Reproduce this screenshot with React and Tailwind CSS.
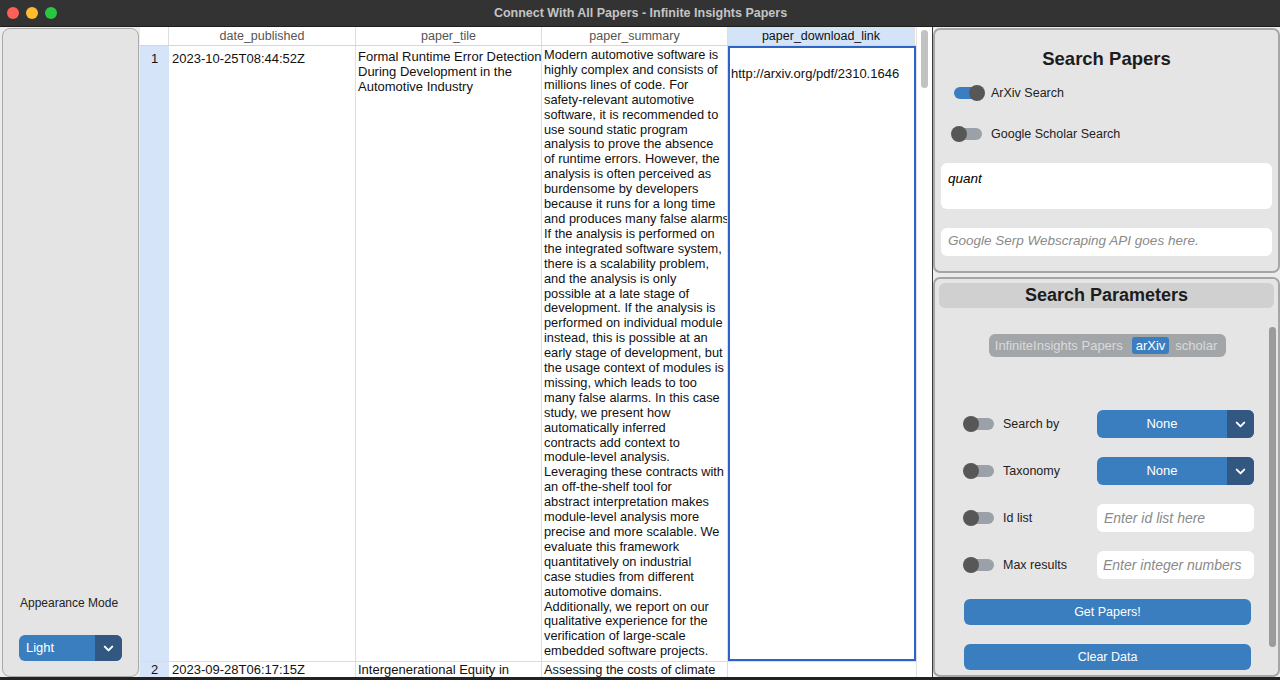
import React from "react";
import { ChevronDown } from "lucide-react";

const summaryLines = [
  "Modern automotive software is",
  "highly complex and consists of",
  "millions lines of code. For",
  "safety-relevant automotive",
  "software, it is recommended to",
  "use sound static program",
  "analysis to prove the absence",
  "of runtime errors. However, the",
  "analysis is often perceived as",
  "burdensome by developers",
  "because it runs for a long time",
  "and produces many false alarms",
  "If the analysis is performed on",
  "the integrated software system,",
  "there is a scalability problem,",
  "and the analysis is only",
  "possible at a late stage of",
  "development. If the analysis is",
  "performed on individual module",
  "instead, this is possible at an",
  "early stage of development, but",
  "the usage context of modules is",
  "missing, which leads to too",
  "many false alarms. In this case",
  "study, we present how",
  "automatically inferred",
  "contracts add context to",
  "module-level analysis.",
  "Leveraging these contracts with",
  "an off-the-shelf tool for",
  "abstract interpretation makes",
  "module-level analysis more",
  "precise and more scalable. We",
  "evaluate this framework",
  "quantitatively on industrial",
  "case studies from different",
  "automotive domains.",
  "Additionally, we report on our",
  "qualitative experience for the",
  "verification of large-scale",
  "embedded software projects.",
];

// switch like the customtkinter one
const Switch = ({ on }) => (
  <div className="relative w-[32px] h-[16px] shrink-0">
    <div
      className={
        on
          ? "absolute left-[1px] right-[1px] top-[2px] bottom-[2px] rounded-full bg-[#3a7ebf]"
          : "absolute left-[1px] right-[1px] top-[2px] bottom-[2px] rounded-full bg-[#9aa1a8]"
      }
    />
    <div
      className={
        on
          ? "absolute right-0 top-0 w-[16px] h-[16px] rounded-full bg-[#575757]"
          : "absolute left-0 top-0 w-[16px] h-[16px] rounded-full bg-[#575757]"
      }
    />
  </div>
);

const Dropdown = ({ value, className, center }) => (
  <div className={"flex rounded-[6px] overflow-hidden bg-[#3a7ebf] text-white text-[13px] " + className}>
    <div className={center ? "flex-1 flex items-center justify-center" : "flex-1 flex items-center pl-[7px]"}>
      {value}
    </div>
    <div className="w-[27px] bg-[#325882] flex items-center justify-center">
      <ChevronDown size={15} strokeWidth={3.2} />
    </div>
  </div>
);

const ParamRow = ({ label, children }) => (
  <div className="flex items-center h-[28px]">
    <div className="flex items-center w-[162px] pl-[28px] whitespace-nowrap">
      <Switch />
      <span className="ml-[8px] text-[12.5px] text-[#222]">{label}</span>
    </div>
    {children}
  </div>
);

export default function App() {
  return (
    <div className="w-[1280px] h-[680px] flex flex-col bg-[#ececec] overflow-hidden font-['Liberation_Sans',Arial,sans-serif]">
      {/* title bar */}
      <div className="h-[27px] shrink-0 bg-[#333333] flex items-center relative border-b border-[#1e1e1e]">
        <div className="flex gap-[7px] pl-[7px]">
          <div className="w-[12px] h-[12px] rounded-full bg-[#ff5f57]" />
          <div className="w-[12px] h-[12px] rounded-full bg-[#febc2e]" />
          <div className="w-[12px] h-[12px] rounded-full bg-[#28c840]" />
        </div>
        <div className="flex-1 text-center text-[12.5px] font-bold text-[#c4c4c4] pr-[56px]">
          Connect With All Papers - Infinite Insights Papers
        </div>
      </div>

      <div className="flex flex-1 min-h-0">
        {/* sidebar */}
        <div className="w-[137px] ml-[2px] mt-[1px] shrink-0 bg-[#e4e4e4] border border-[#a9a9a9] rounded-[8px] flex flex-col justify-end pb-[15px]">
          <div className="text-[12px] text-[#222] pl-[17px] mb-[23px]">Appearance Mode</div>
          <Dropdown value="Light" className="ml-[16px] w-[103px] h-[26px]" />
        </div>

        {/* table */}
        <div className="flex flex-1 min-w-0 bg-white ml-[1px] text-[13px] text-[#111]">
          <div className="w-[776px] flex flex-col overflow-hidden">
            <div className="flex h-[19px] shrink-0 border-b border-[#d6d6d6] text-[#555] text-[12.5px]">
              <div className="w-[29px] border-r border-[#dedede]" />
              <div className="w-[187px] border-r border-[#dedede] text-center leading-[19px]">date_published</div>
              <div className="w-[186px] border-r border-[#dedede] text-center leading-[19px]">paper_tile</div>
              <div className="w-[186px] border-r border-[#dedede] text-center leading-[19px]">paper_summary</div>
              <div className="w-[187px] bg-[#d3e3f8] text-[#111] text-center leading-[19px] border-r border-[#dedede]">paper_download_link</div>
            </div>
            <div className="flex h-[616px] shrink-0 border-b border-[#dcdcdc]">
              <div className="w-[29px] bg-[#d5e4f8] text-center pt-[3px]">1</div>
              <div className="w-[187px] border-r border-[#dedede] pl-[3px] pt-[3px]">2023-10-25T08:44:52Z</div>
              <div className="w-[186px] border-r border-[#dedede] pl-[2px] pt-[3px] leading-[15px] whitespace-nowrap">
                <div>Formal Runtime Error Detection</div>
                <div>During Development in the</div>
                <div>Automotive Industry</div>
              </div>
              <div className="w-[186px] border-r border-[#dedede] pl-[2px] pt-[2px] leading-[14.9px] text-[12.8px] whitespace-nowrap overflow-hidden">
                {summaryLines.map((l, i) => (
                  <div key={i}>{l}</div>
                ))}
              </div>
              <div className="w-[188px] border-2 border-[#2c64c8] pl-[1px] pt-[16px]">http://arxiv.org/pdf/2310.1646</div>
            </div>
            <div className="flex h-[20px] shrink-0 leading-[16px]">
              <div className="w-[29px] bg-[#d5e4f8] text-center">2</div>
              <div className="w-[187px] border-r border-[#dedede] pl-[3px]">2023-09-28T06:17:15Z</div>
              <div className="w-[186px] border-r border-[#dedede] pl-[2px]">Intergenerational Equity in</div>
              <div className="w-[186px] border-r border-[#dedede] pl-[2px] text-[12.8px]">Assessing the costs of climate</div>
              <div className="w-[188px]" />
            </div>
          </div>
          {/* table scrollbar */}
          <div className="w-[15px] border-l border-[#e2e2e2] pl-[4px] pt-[3px]">
            <div className="w-[7px] h-[58px] rounded-full bg-[#c2c2c2]" />
          </div>
        </div>

        {/* right column */}
        <div className="w-[348px] shrink-0 flex flex-col gap-[4px] border-l border-[#3a3a3a] pt-[1px]">
          <div className="h-[245px] shrink-0 bg-[#e5e5e5] border-2 border-[#a6a6a6] rounded-[7px] flex flex-col px-[6px]">
            <div className="text-center text-[18.5px] font-bold text-[#1c1c1c] mt-[18px] leading-[22px]">Search Papers</div>
            <div className="flex items-center ml-[12px] mt-[14px]">
              <Switch on />
              <span className="ml-[6px] text-[12.5px] text-[#222]">ArXiv Search</span>
            </div>
            <div className="flex items-center ml-[10px] mt-[22px]">
              <Switch />
              <span className="ml-[8px] text-[12.5px] text-[#222]">Google Scholar Search</span>
            </div>
            <div className="mt-[19px] h-[46px] bg-white rounded-[6px] px-[7px] pt-[6px] text-[13.5px] italic text-black">quant</div>
            <div className="mt-[19px] h-[28px] bg-white rounded-[6px] px-[7px] flex items-center text-[13.5px] italic text-[#8a8a8a]">
              Google Serp Webscraping API goes here.
            </div>
          </div>

          <div className="flex-1 bg-[#e5e5e5] border-2 border-[#a6a6a6] rounded-[7px] flex flex-col relative">
            <div className="mx-[4px] mt-[4px] h-[25px] rounded-[6px] bg-[#d0d0d0] text-center text-[18px] font-bold text-[#1c1c1c] leading-[25px]">
              Search Parameters
            </div>
            <div className="flex justify-center mt-[26px] pl-[2px]">
              <div className="flex items-center h-[23px] rounded-[6px] bg-[#a3a6a9] px-[3px] text-[13px] text-[#dadada]">
                <span className="px-[3px]">InfiniteInsights Papers</span>
                <span className="ml-[6px] px-[4px] h-[17px] leading-[17px] rounded-[3px] bg-[#3a7ebf] text-white">arXiv</span>
                <span className="px-[6px]">scholar</span>
              </div>
            </div>
            <div className="flex flex-col gap-[19px] mt-[53px]">
              <ParamRow label="Search by">
                <Dropdown value="None" center className="w-[157px] h-[28px]" />
              </ParamRow>
              <ParamRow label="Taxonomy">
                <Dropdown value="None" center className="w-[157px] h-[28px]" />
              </ParamRow>
              <ParamRow label="Id list">
                <div className="w-[157px] h-[28px] bg-white rounded-[6px] px-[7px] flex items-center text-[14px] italic text-[#8a8a8a]">Enter id list here</div>
              </ParamRow>
              <ParamRow label="Max results">
                <div className="w-[157px] h-[28px] bg-white rounded-[6px] px-[6px] flex items-center text-[14px] italic text-[#8a8a8a] whitespace-nowrap overflow-hidden">Enter integer numbers</div>
              </ParamRow>
            </div>
            <div className="mt-[20px] ml-[29px] w-[287px] h-[26px] rounded-[6px] bg-[#3a7ebf] text-white text-[12.5px] flex items-center justify-center">Get Papers!</div>
            <div className="mt-[19px] ml-[29px] w-[287px] h-[26px] rounded-[6px] bg-[#3a7ebf] text-white text-[12.5px] flex items-center justify-center">Clear Data</div>
            {/* frame scrollbar */}
            <div className="absolute right-[2px] top-[48px] w-[7px] h-[320px] rounded-full bg-[#9b9b9b]" />
          </div>
        </div>
      </div>
      <div className="h-[3px] shrink-0 bg-[#222]" />
    </div>
  );
}
